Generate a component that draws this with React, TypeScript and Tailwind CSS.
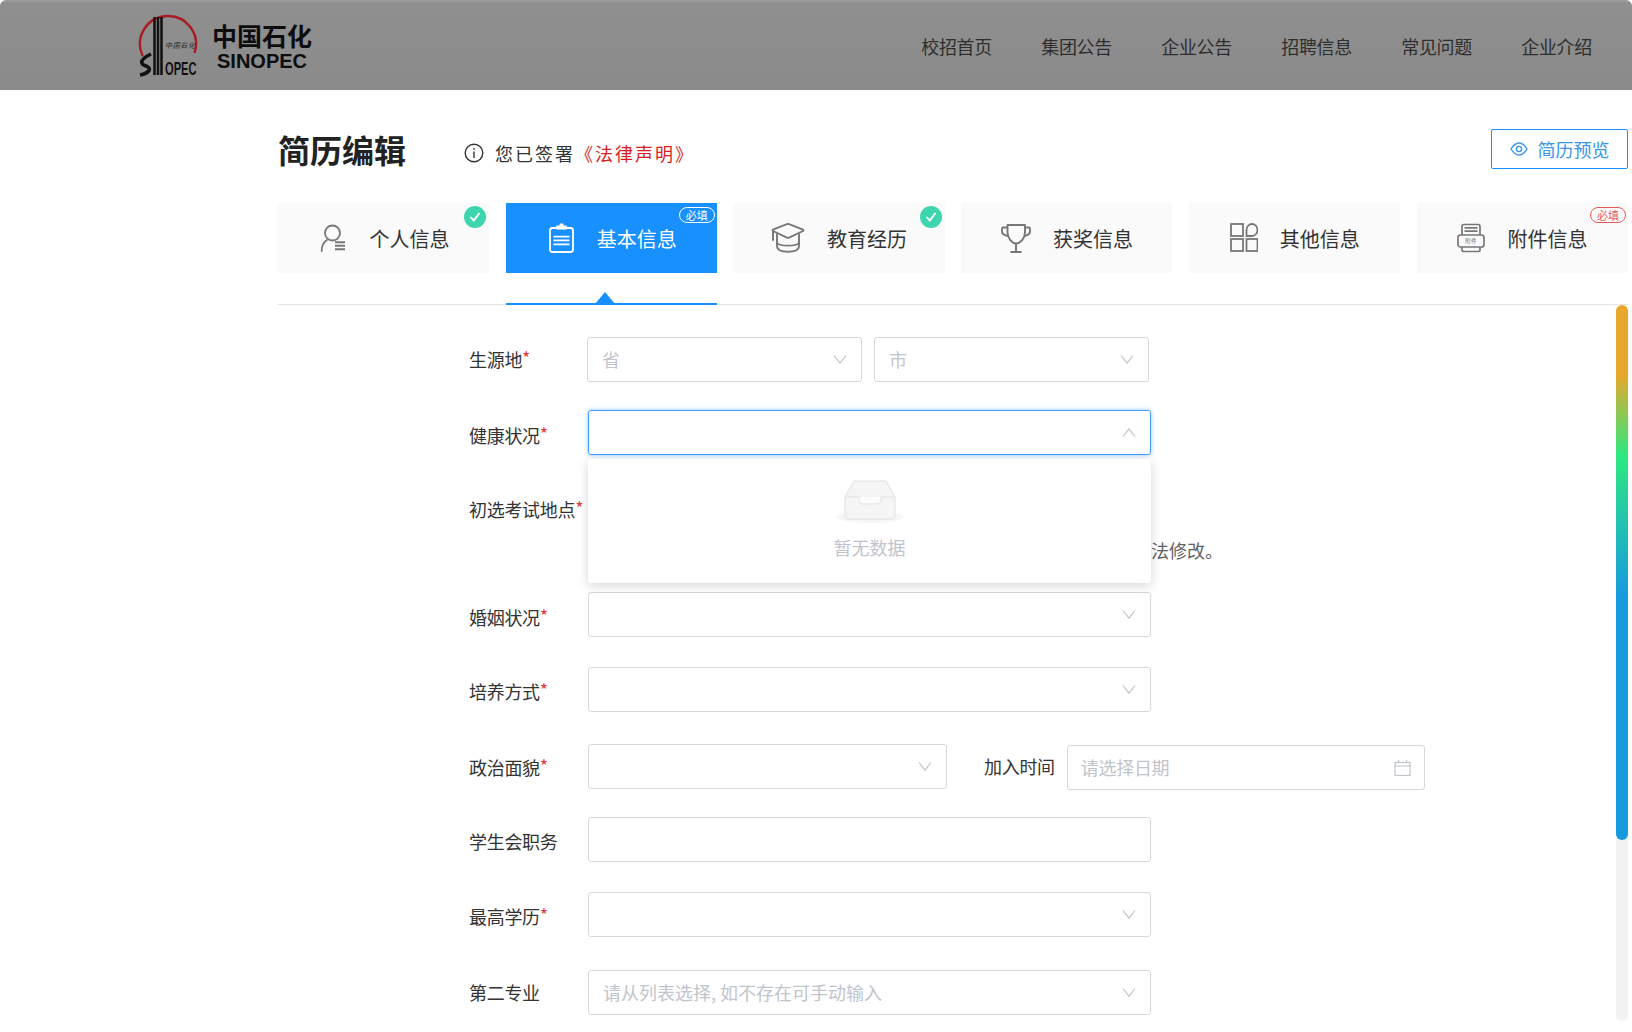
import type { ReactNode } from 'react';

const navItems = ['校招首页', '集团公告', '企业公告', '招聘信息', '常见问题', '企业介绍'];

function Chevron({ up = false }: { up?: boolean }) {
  return (
    <svg width="14" height="9" viewBox="0 0 14 9" fill="none" stroke="#c0c4cc" strokeWidth="1.2" className="shrink-0">
      <polyline points={up ? '1,8.5 7,0.8 13,8.5' : '1,0.5 7,8.2 13,0.5'} />
    </svg>
  );
}

function Logo() {
  return (
    <svg width="62" height="66" viewBox="0 -2 62 66" fill="none">
      <path d="M4.7 41 A28 28 0 1 1 56.5 38" stroke="#a81c22" strokeWidth="2.4" />
      <path d="M16.5 2 V60 M20 2 V60 M23.5 2 V60" stroke="#111" strokeWidth="2.5" />
      <path d="M13 39 C1 45 2 49 8 51 C14 53 12 58 2 60" stroke="#111" strokeWidth="3.6" />
      <text x="27" y="33" fontSize="7" fill="#222" fontStyle="italic" fontFamily="'Noto Sans CJK SC',sans-serif" textLength="30">中国石化</text>
      <text transform="translate(27 60) scale(0.62 1)" fontSize="18" fontWeight="700" fill="#111" fontFamily="'Liberation Sans',sans-serif">OPEC</text>
    </svg>
  );
}

function UserIcon() {
  return (
    <svg width="26" height="30" viewBox="0 0 26 30" fill="none" stroke="#777" strokeWidth="1.8" strokeLinecap="round">
      <circle cx="12.5" cy="10" r="7.5" />
      <path d="M7 17 C3.5 19 1.8 23 1.7 28" />
      <path d="M15 19.3 H25 M15 22.8 H25 M15 26.3 H25" strokeWidth="2" strokeLinecap="butt" />
    </svg>
  );
}

function ClipboardIcon() {
  return (
    <svg width="25" height="30" viewBox="0 0 25 30" fill="none" stroke="#fff" strokeWidth="1.8">
      <rect x="1" y="5" width="23" height="24" rx="2.5" />
      <rect x="7" y="2.5" width="11" height="4" rx="1" fill="#fff" stroke="none" />
      <rect x="10.5" y="0.5" width="4" height="3" rx="1" fill="#fff" stroke="none" />
      <path d="M4.5 13.7 H20.5 M4.5 17.4 H20.5 M4.5 21.3 H20.5" />
    </svg>
  );
}

function CapIcon() {
  return (
    <svg width="34" height="30" viewBox="0 0 34 30" fill="none" stroke="#777" strokeWidth="1.9" strokeLinecap="round">
      <path d="M2 8 Q1 7 2.5 6.4 L16 1.2 Q17 0.8 18 1.2 L31.5 6.4 Q33 7 32 8 L18 14.6 Q17 15.2 16 14.6 Z" strokeLinejoin="round" />
      <path d="M6 11 V23 C6 27 11 28.8 17 28.8 C23 28.8 28 27 28 23 V11" />
      <path d="M6 20 C9 23.5 25 23.5 28 20" />
      <path d="M2 8 V17" />
    </svg>
  );
}

function TrophyIcon() {
  return (
    <svg width="30" height="30" viewBox="0 0 30 30" fill="none" stroke="#777" strokeWidth="1.9">
      <path d="M6.5 2 H24 V9 C24 15 20 20 15 20.5 C10.5 20 6.5 15 6.5 9 Z" strokeLinejoin="round" />
      <path d="M6.5 4.5 H2 C1.2 4.5 1 5 1 6 V8.5 C1 11 3.5 12.5 7.5 13 M24 4.5 H28 C28.8 4.5 29 5 29 6 V8.5 C29 11 26.5 12.5 23 13" />
      <path d="M15 20.5 V28.5" />
      <path d="M9.5 29 H20.5" strokeWidth="2" />
    </svg>
  );
}

function GridIcon() {
  return (
    <svg width="28" height="30" viewBox="0 0 28 30" fill="none" stroke="#777" strokeWidth="1.8">
      <rect x="1" y="1" width="12" height="12" />
      <path d="M16.5 13 V7 A5.5 6 0 1 1 22 13 Z" />
      <rect x="1" y="16" width="12" height="12" />
      <rect x="16.5" y="16" width="11" height="12" />
    </svg>
  );
}

function AttachIcon() {
  return (
    <svg width="28" height="30" viewBox="0 0 28 30" fill="none" stroke="#777" strokeWidth="1.7">
      <path d="M5 12 V3.5 Q5 1.5 7 1.5 H21 Q23 1.5 23 3.5 V12" />
      <path d="M7.5 4.8 H20.5 M7.5 8.2 H20.5" />
      <rect x="1" y="12" width="26" height="12" rx="2.5" />
      <path d="M5 24 V27 Q5 28.5 7 28.5 H21 Q23 28.5 23 27 V24" />
      <text x="14" y="20.2" fontSize="5.5" textAnchor="middle" fill="#777" stroke="none" letterSpacing="0.6" fontFamily="'Noto Sans CJK SC',sans-serif">附件</text>
    </svg>
  );
}

function CheckBadge() {
  return (
    <span className="absolute right-[3px] top-[3px] flex h-[22px] w-[22px] items-center justify-center rounded-full bg-[#3dd5ae]">
      <svg width="12" height="10" viewBox="0 0 12 10" fill="none" stroke="#fff" strokeWidth="1.8">
        <polyline points="1.5,5 4.8,8.5 10.5,1" />
      </svg>
    </span>
  );
}

function RequiredBadge({ active = false }: { active?: boolean }) {
  return (
    <span
      className={`absolute right-[2px] top-[4px] flex h-[16px] w-[36px] items-center justify-center rounded-full border text-[11px] leading-none ${
        active ? 'border-white text-white' : 'border-[#e8585a] text-[#e8585a]'
      }`}
    >
      必填
    </span>
  );
}

function Tab({ icon, label, active, badge, className = 'gap-[22px]' }: { icon: ReactNode; label: string; active?: boolean; badge?: ReactNode; className?: string }) {
  return (
    <div
      className={`relative flex h-[70px] w-[211px] items-center justify-center text-[20px] ${className} ${
        active ? 'bg-[#1890ff] text-white' : 'bg-[#fafafa] text-[#333]'
      }`}
    >
      {icon}
      <span className="mt-[1px]">{label}</span>
      {badge}
      {active && (
        <>
          <span className="absolute -bottom-[32px] left-0 h-[2px] w-full bg-[#1890ff]" />
          <span className="absolute -bottom-[31px] left-[89px] h-0 w-0 border-x-[10px] border-b-[12px] border-x-transparent border-b-[#1890ff]" />
        </>
      )}
    </div>
  );
}

function Row({ label, required, className, labelClass = 'pt-[9px]', children }: { label: string; required?: boolean; className: string; labelClass?: string; children: ReactNode }) {
  return (
    <div className={`flex items-start ${className}`}>
      <label className={`w-[119px] shrink-0 text-[18px] leading-[32px] tracking-[-0.3px] text-[#333] ${labelClass}`}>
        {label}
        {required && <span className="relative -top-[2px] text-[#e4393c]">*</span>}
      </label>
      {children}
    </div>
  );
}

function Select({ text, className = 'w-[563px]' }: { text?: string; className?: string }) {
  return (
    <div className={`flex h-[45px] items-center justify-between rounded-[3px] border border-[#d6d8dc] bg-white pl-[14px] pr-[14px] text-[18px] text-[#c0c4cc] ${className}`}>
      <span>{text}</span>
      <Chevron />
    </div>
  );
}

export default function App() {
  return (
    <div className="relative h-screen overflow-hidden bg-white font-['Noto_Sans_CJK_SC','Liberation_Sans',sans-serif]">
      <header className="flex h-[90px] items-center justify-between rounded-t-[6px] border-t-2 border-[#9a9a9a] bg-gradient-to-b from-[#8f8f8f] to-[#8b8b8b] pl-[138px] pr-[40px]">
        <div className="flex items-center gap-[12px]">
          <Logo />
          <div className="mt-[2px] flex flex-col items-center gap-[3px] text-[#0d0d0d]">
            <span className="text-[25px] font-bold leading-[25px]">中国石化</span>
            <span className="font-['Liberation_Sans',sans-serif] text-[20px] font-bold leading-[20px]">SINOPEC</span>
          </div>
        </div>
        <nav className="flex gap-[49.2px] text-[18px] tracking-[-0.3px] text-[#2e2e2e]">
          {navItems.map(item => (
            <a key={item}>{item}</a>
          ))}
        </nav>
      </header>

      <main className="ml-[278px] w-[1350px]">
        {/* Title */}
        <div className="flex items-center justify-between pt-[39px]">
          <div className="flex items-center">
            <h1 className="text-[32px] font-bold leading-[40px] text-[#222]">简历编辑</h1>
            <svg width="20" height="20" viewBox="0 0 20 20" fill="none" stroke="#333" strokeWidth="1.4" className="ml-[58px] mt-[8px]">
              <circle cx="10" cy="10" r="8.8" />
              <path d="M10 8.5 V15 M10 5 V6.8" />
            </svg>
            <span className="ml-[11px] mt-[8px] text-[18px] tracking-[2px] text-[#333]">
              您已签署<span className="text-[#d81e1e]">《法律声明》</span>
            </span>
          </div>
          <button className="flex h-[40px] w-[137px] items-center justify-center gap-[10px] rounded-[2px] border border-[#1890ff] text-[18px] text-[#3a95e8]">
            <svg width="18" height="14" viewBox="0 0 18 14" fill="none" stroke="#3a95e8" strokeWidth="1.4">
              <path d="M1 7 C3.5 3 6 1 9 1 C12 1 14.5 3 17 7 C14.5 11 12 13 9 13 C6 13 3.5 11 1 7 Z" />
              <circle cx="9" cy="7" r="2.6" />
            </svg>
            简历预览
          </button>
        </div>

        {/* Tabs */}
        <div className="mt-[34px] flex justify-between border-b border-[#e4e4e4] pb-[31px]">
          <Tab icon={<UserIcon />} label="个人信息" badge={<CheckBadge />} className="gap-[24px] pl-[2px]" />
          <Tab icon={<ClipboardIcon />} label="基本信息" active badge={<RequiredBadge active />} className="gap-[23px] pl-[3px]" />
          <Tab icon={<CapIcon />} label="教育经历" badge={<CheckBadge />} />
          <Tab icon={<TrophyIcon />} label="获奖信息" />
          <Tab icon={<GridIcon />} label="其他信息" />
          <Tab icon={<AttachIcon />} label="附件信息" badge={<RequiredBadge />} />
        </div>

        <div className="flex">
          {/* Form */}
          <div className="flex-1 pl-[191px] pt-[32px]">
            <Row label="生源地" required className="" labelClass="pt-[6px]">
              <div className="-ml-px flex gap-[12px]">
                <Select text="省" className="w-[275px]" />
                <Select text="市" className="w-[275px]" />
              </div>
            </Row>

            <Row label="健康状况" required className="mt-[28px]">
              <div className="relative">
                <div className="flex h-[45px] w-[563px] items-center justify-end rounded-[3px] border border-[#409eff] pr-[14px] shadow-[0_0_4px_rgba(64,158,255,0.6)]">
                  <Chevron up />
                </div>
                {/* Dropdown */}
                <div className="absolute left-0 top-[49px] z-10 flex h-[124px] w-[563px] flex-col items-center rounded-[3px] bg-white pt-[21px] shadow-[0_3px_12px_rgba(0,0,0,0.16)]">
                  <svg width="68" height="44" viewBox="0 0 68 44" fill="none">
                    <ellipse cx="34" cy="37" rx="33.5" ry="6" fill="#f6f6f6" />
                    <path d="M9 17 L18 1 H50 L59 17 V36 C59 38 58 39 56 39 H12 C10 39 9 38 9 36 Z" fill="#f5f5f5" stroke="#e2e2e2" />
                    <path d="M9 17 H23 V20 C23 23 25 24 27 24 H41 C43 24 45 23 45 20 V17 H59" stroke="#e2e2e2" fill="#fcfcfc" />
                  </svg>
                  <span className="mt-[11px] text-[18px] leading-[24px] text-[#c0c4cc]">暂无数据</span>
                </div>
              </div>
            </Row>

            <Row label="初选考试地点" required className="mt-[28px]" labelClass="pt-[10px]">
              <div>
                <div className="h-[45px] w-[563px]" />
                <p className="mt-[10px] w-[635px] text-right text-[18px] leading-[24px] text-[#606266]">提交后无法修改。</p>
              </div>
            </Row>

            <Row label="婚姻状况" required className="mt-[30px]">
              <Select />
            </Row>
            <Row label="培养方式" required className="mt-[30px]" labelClass="pt-[8px]">
              <Select />
            </Row>
            <Row label="政治面貌" required className="mt-[32px]" labelClass="pt-[7px]">
              <div className="flex items-start">
                <Select className="w-[359px]" />
                <span className="ml-[37px] pt-[6px] text-[18px] leading-[32px] tracking-[-0.3px] text-[#333]">加入时间</span>
                <div className="ml-[12px] mt-[1px] flex h-[45px] w-[358px] items-center justify-between rounded-[3px] border border-[#d6d8dc] pl-[13px] pr-[13px] text-[18px] text-[#c0c4cc]">
                  <span className="tracking-[-0.3px]">请选择日期</span>
                  <svg width="17" height="16" viewBox="0 0 17 16" fill="none" stroke="#c0c4cc" strokeWidth="1.2">
                    <rect x="1" y="2.5" width="15" height="13" />
                    <path d="M1 6 H16 M4.5 0 V2.5 M12.5 0 V2.5" />
                  </svg>
                </div>
              </div>
            </Row>
            <Row label="学生会职务" className="mt-[27px]" labelClass="pt-[8px]">
              <div className="h-[45px] w-[563px] rounded-[3px] border border-[#d6d8dc]" />
            </Row>
            <Row label="最高学历" required className="mt-[30px]" labelClass="pt-[8px]">
              <Select />
            </Row>
            <Row label="第二专业" className="mt-[33px]" labelClass="pt-[6px]">
              <Select text="请从列表选择, 如不存在可手动输入" />
            </Row>
          </div>

          {/* Scrollbar */}
          <div className="h-[716px] w-[12px] rounded-full bg-[#f2f2f2]">
            <div className="h-[535px] rounded-full bg-[linear-gradient(180deg,#e9a82b_0%,#e9a82b_13%,#2ee87f_28%,#179bdf_54%,#179bdf_100%)]" />
          </div>
        </div>
      </main>
    </div>
  );
}
